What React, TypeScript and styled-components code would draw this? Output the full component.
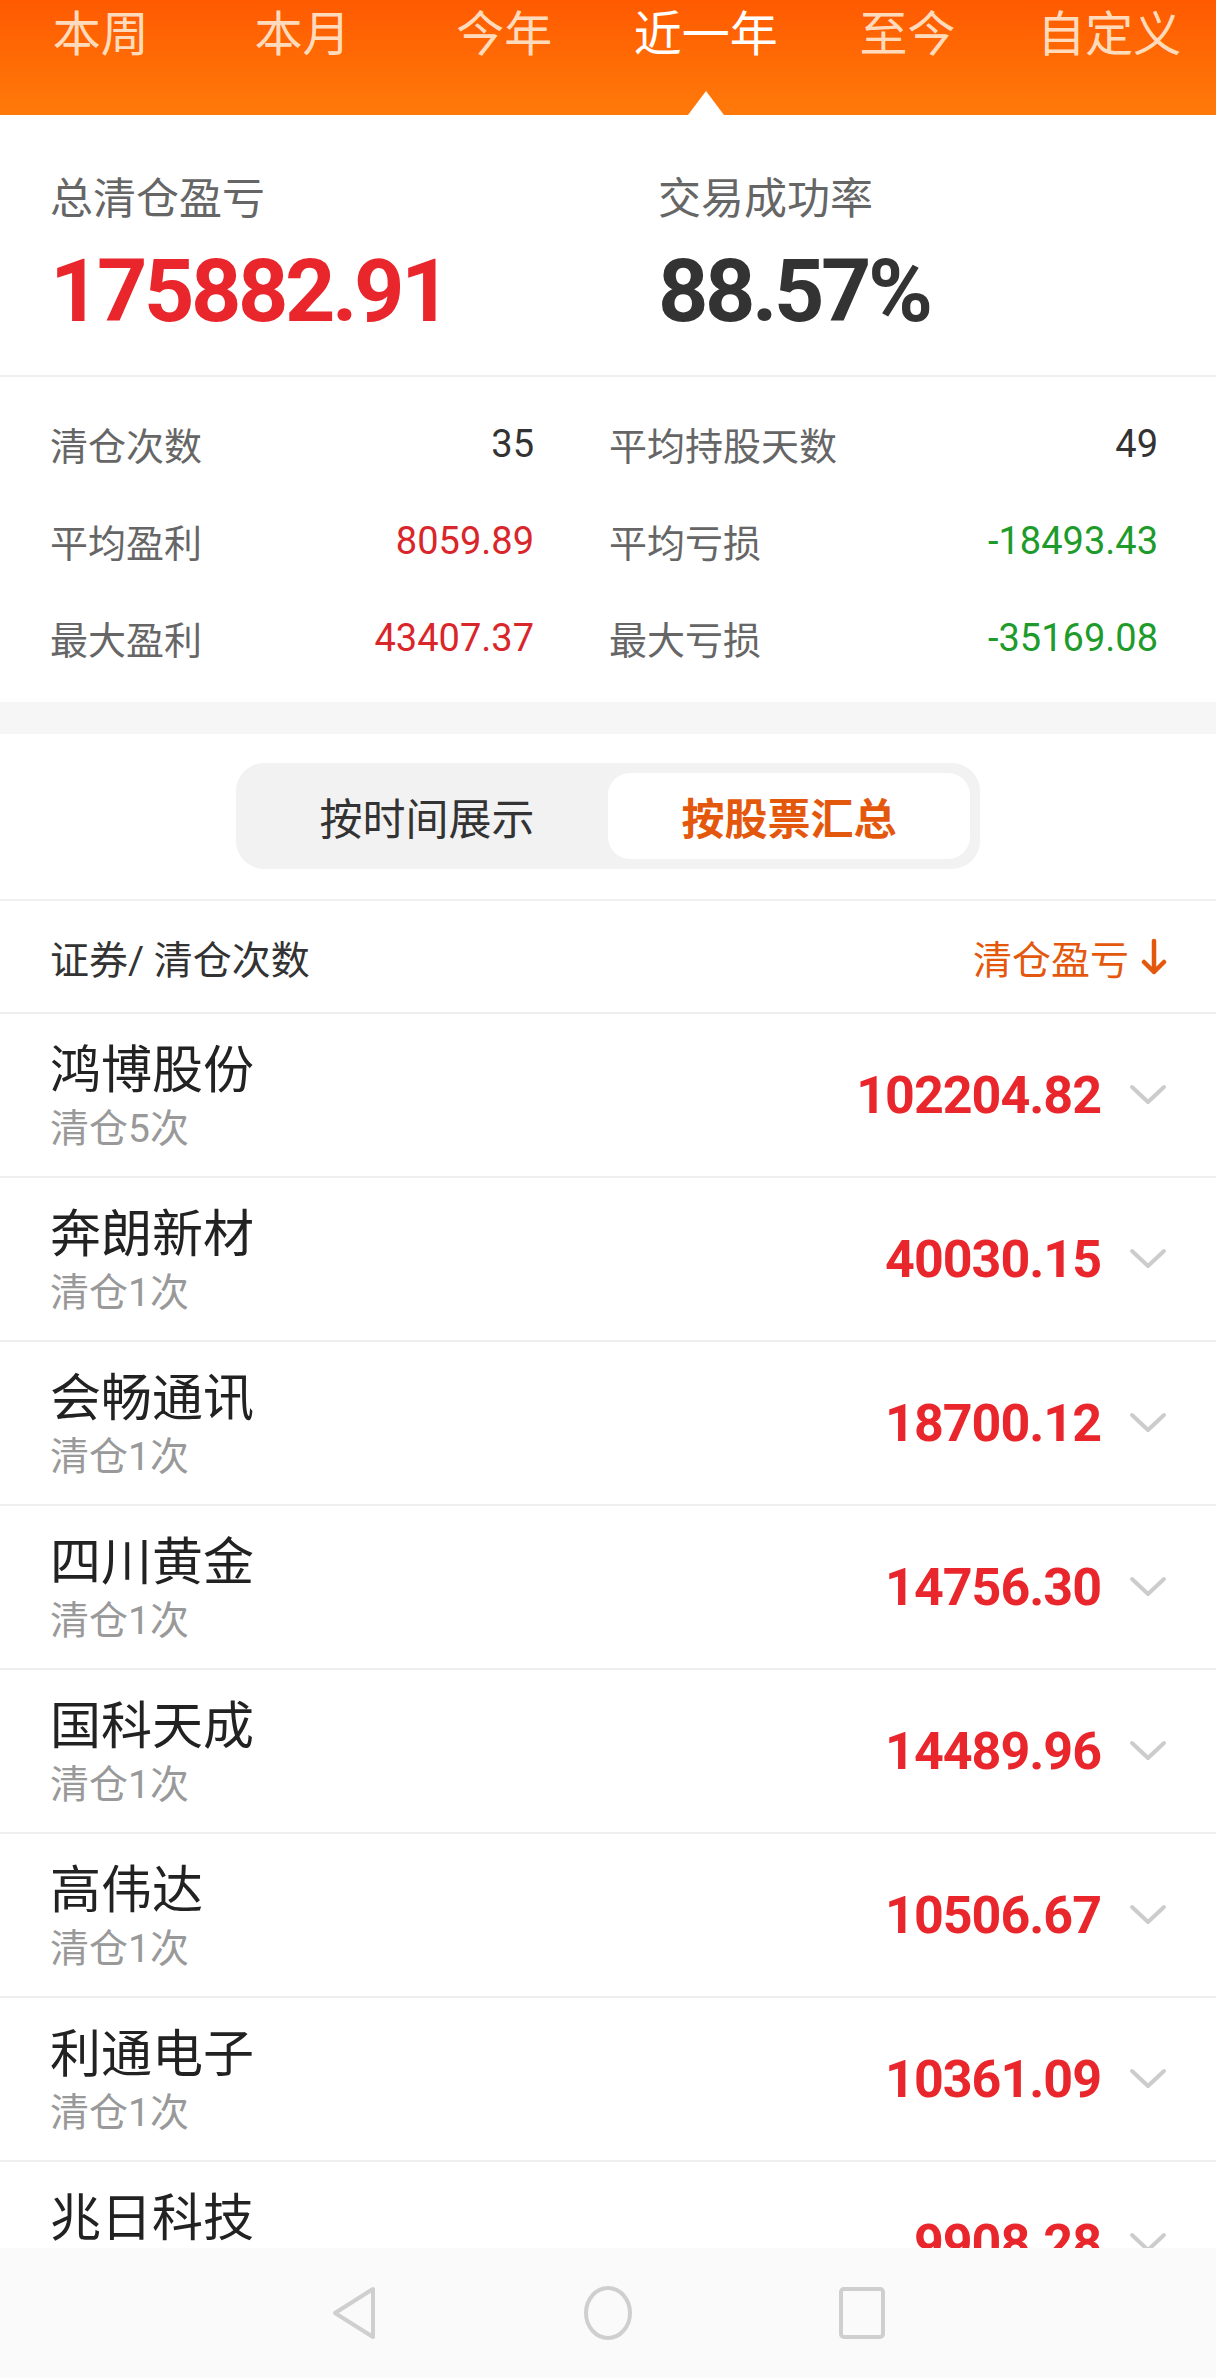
import styled, { createGlobalStyle } from "styled-components"

const GlobalStyle = createGlobalStyle`
  html, body {
    margin: 0;
    padding: 0;
    background: #fff;
  }
  body {
    font-family: Roboto, "Noto Sans CJK SC", sans-serif;
  }
`

const RED = "#E8262B"
const GREEN = "#1E9B2A"
const ORANGE = "#E4580D"

const Page = styled.div`
  position: relative;
  width: 1216px;
  height: 2378px;
  overflow: hidden;
  background: #fff;
`

const TabBar = styled.div`
  display: grid;
  grid-template-columns: repeat(6, 1fr);
  height: 115px;
  padding-right: 6px;
  background: linear-gradient(180deg, #ff5a00 0%, #ff7a0a 100%);
`

const Tab = styled.div<{ $active?: boolean }>`
  position: relative;
  text-align: center;
  padding-top: 5px;
  font-size: 48px;
  line-height: 60px;
  color: ${(p) => (p.$active ? "#fff" : "rgba(255, 236, 215, 0.9)")};

  ${(p) =>
    p.$active &&
    `
    &::after {
      content: "";
      position: absolute;
      left: 50%;
      bottom: 0;
      transform: translateX(-50%);
      border-left: 18px solid transparent;
      border-right: 18px solid transparent;
      border-bottom: 24px solid #fff;
    }
  `}
`

const Summary = styled.section`
  display: grid;
  grid-template-columns: 1fr 1fr;
  padding: 58px 0 34px;
  border-bottom: 2px solid #f0f0f0;
`

const SummaryCell = styled.div`
  padding-left: 50px;
`

const SummaryLabel = styled.div`
  font-size: 43px;
  line-height: 52px;
  color: #666;
`

const SummaryValue = styled.div<{ $color: string }>`
  margin-top: 16px;
  font-size: 88px;
  line-height: 100px;
  font-weight: 700;
  letter-spacing: -3.5px;
  color: ${(p) => p.$color};
`

const Stats = styled.section`
  display: grid;
  grid-template-columns: 484px 549px;
  column-gap: 75px;
  padding: 18px 0 16px 50px;
`

const StatCell = styled.div`
  display: flex;
  justify-content: space-between;
  align-items: center;
  height: 97px;
`

const StatLabel = styled.span`
  font-size: 38px;
  color: #666;
`

const StatValue = styled.span<{ $color: string }>`
  font-size: 38px;
  color: ${(p) => p.$color};
`

const Gap = styled.div`
  height: 32px;
  background: #f6f6f6;
`

const SegmentWrap = styled.div`
  display: flex;
  justify-content: center;
  padding: 29px 0 30px;
  border-bottom: 2px solid #efefef;
`

const Segment = styled.div`
  display: flex;
  box-sizing: border-box;
  width: 744px;
  height: 106px;
  padding: 10px;
  border-radius: 28px;
  background: #f2f2f2;
`

const SegmentItem = styled.div<{ $active?: boolean }>`
  flex: 1;
  display: flex;
  align-items: center;
  justify-content: center;
  border-radius: 22px;
  font-size: 43px;
  background: ${(p) => (p.$active ? "#fff" : "transparent")};
  color: ${(p) => (p.$active ? ORANGE : "#333")};
  font-weight: ${(p) => (p.$active ? 700 : 400)};
`

const ListHeader = styled.div`
  display: flex;
  align-items: center;
  justify-content: space-between;
  box-sizing: border-box;
  height: 113px;
  padding: 0 49px 0 50px;
  border-bottom: 2px solid #efefef;
  font-size: 39px;
  color: #333;
`

const SortLabel = styled.span`
  display: flex;
  align-items: center;
  gap: 12px;
  color: ${ORANGE};
`

const Row = styled.div`
  display: flex;
  align-items: center;
  justify-content: space-between;
  box-sizing: border-box;
  height: 164px;
  padding: 0 49px 0 50px;
  border-bottom: 2px solid #efefef;
`

const NameBlock = styled.div`
  display: flex;
  flex-direction: column;
  padding-top: 4px;
`

const Name = styled.div`
  font-size: 51px;
  line-height: 58px;
  color: #222;
`

const Sub = styled.div`
  margin-top: 6px;
  font-size: 39px;
  line-height: 46px;
  color: #999;
`

const ValueGroup = styled.div`
  display: flex;
  align-items: center;
  gap: 28px;
`

const Value = styled.span`
  font-size: 52px;
  font-weight: 700;
  letter-spacing: -1px;
  color: ${RED};
`

const NavBar = styled.nav`
  position: absolute;
  left: 0;
  right: 0;
  bottom: 0;
  height: 130px;
  display: flex;
  align-items: center;
  justify-content: center;
  gap: 204px;
  background: #fafafa;
`

const NavIcon = styled.svg`
  width: 50px;
  height: 56px;
  fill: none;
  stroke: #cfcfcf;
  stroke-width: 4;
  stroke-linejoin: round;
`

const tabs = ["本周", "本月", "今年", "近一年", "至今", "自定义"]

const stats = [
  { label: "清仓次数", value: "35", color: "#333" },
  { label: "平均持股天数", value: "49", color: "#333" },
  { label: "平均盈利", value: "8059.89", color: "#D9262B" },
  { label: "平均亏损", value: "-18493.43", color: GREEN },
  { label: "最大盈利", value: "43407.37", color: "#D9262B" },
  { label: "最大亏损", value: "-35169.08", color: GREEN },
]

const stocks = [
  { name: "鸿博股份", times: 5, pnl: "102204.82" },
  { name: "奔朗新材", times: 1, pnl: "40030.15" },
  { name: "会畅通讯", times: 1, pnl: "18700.12" },
  { name: "四川黄金", times: 1, pnl: "14756.30" },
  { name: "国科天成", times: 1, pnl: "14489.96" },
  { name: "高伟达", times: 1, pnl: "10506.67" },
  { name: "利通电子", times: 1, pnl: "10361.09" },
  { name: "兆日科技", times: 1, pnl: "9908.28" },
]

function Chevron() {
  return (
    <svg width="38" height="24" viewBox="0 0 38 24" fill="none">
      <path d="M3 4 L19 19 L35 4" stroke="#cccccc" strokeWidth="4" strokeLinecap="round" strokeLinejoin="round" />
    </svg>
  )
}

function DownArrow() {
  return (
    <svg width="26" height="38" viewBox="0 0 26 38" fill="none">
      <path d="M13 3 V34 M3 24 L13 34 L23 24" stroke={ORANGE} strokeWidth="4.5" strokeLinecap="round" strokeLinejoin="round" />
    </svg>
  )
}

export default function App() {
  return (
    <>
      <GlobalStyle />
      <Page>
        <TabBar>
          {tabs.map((t) => (
            <Tab key={t} $active={t === "近一年"}>
              {t}
            </Tab>
          ))}
        </TabBar>

        <Summary>
          <SummaryCell>
            <SummaryLabel>总清仓盈亏</SummaryLabel>
            <SummaryValue $color={RED}>175882.91</SummaryValue>
          </SummaryCell>
          <SummaryCell>
            <SummaryLabel>交易成功率</SummaryLabel>
            <SummaryValue $color="#333">88.57%</SummaryValue>
          </SummaryCell>
        </Summary>

        <Stats>
          {stats.map((s) => (
            <StatCell key={s.label}>
              <StatLabel>{s.label}</StatLabel>
              <StatValue $color={s.color}>{s.value}</StatValue>
            </StatCell>
          ))}
        </Stats>

        <Gap />

        <SegmentWrap>
          <Segment>
            <SegmentItem>按时间展示</SegmentItem>
            <SegmentItem $active>按股票汇总</SegmentItem>
          </Segment>
        </SegmentWrap>

        <ListHeader>
          <span>证券/ 清仓次数</span>
          <SortLabel>
            清仓盈亏
            <DownArrow />
          </SortLabel>
        </ListHeader>

        {stocks.map((s) => (
          <Row key={s.name}>
            <NameBlock>
              <Name>{s.name}</Name>
              <Sub>清仓{s.times}次</Sub>
            </NameBlock>
            <ValueGroup>
              <Value>{s.pnl}</Value>
              <Chevron />
            </ValueGroup>
          </Row>
        ))}

        <NavBar>
          <NavIcon viewBox="0 0 50 56">
            <path d="M44 4 L44 52 L6 28 Z" />
          </NavIcon>
          <NavIcon viewBox="0 0 50 56">
            <ellipse cx="25" cy="28" rx="22" ry="25" />
          </NavIcon>
          <NavIcon viewBox="0 0 50 56">
            <rect x="4" y="4" width="42" height="48" rx="3" />
          </NavIcon>
        </NavBar>
      </Page>
    </>
  )
}
